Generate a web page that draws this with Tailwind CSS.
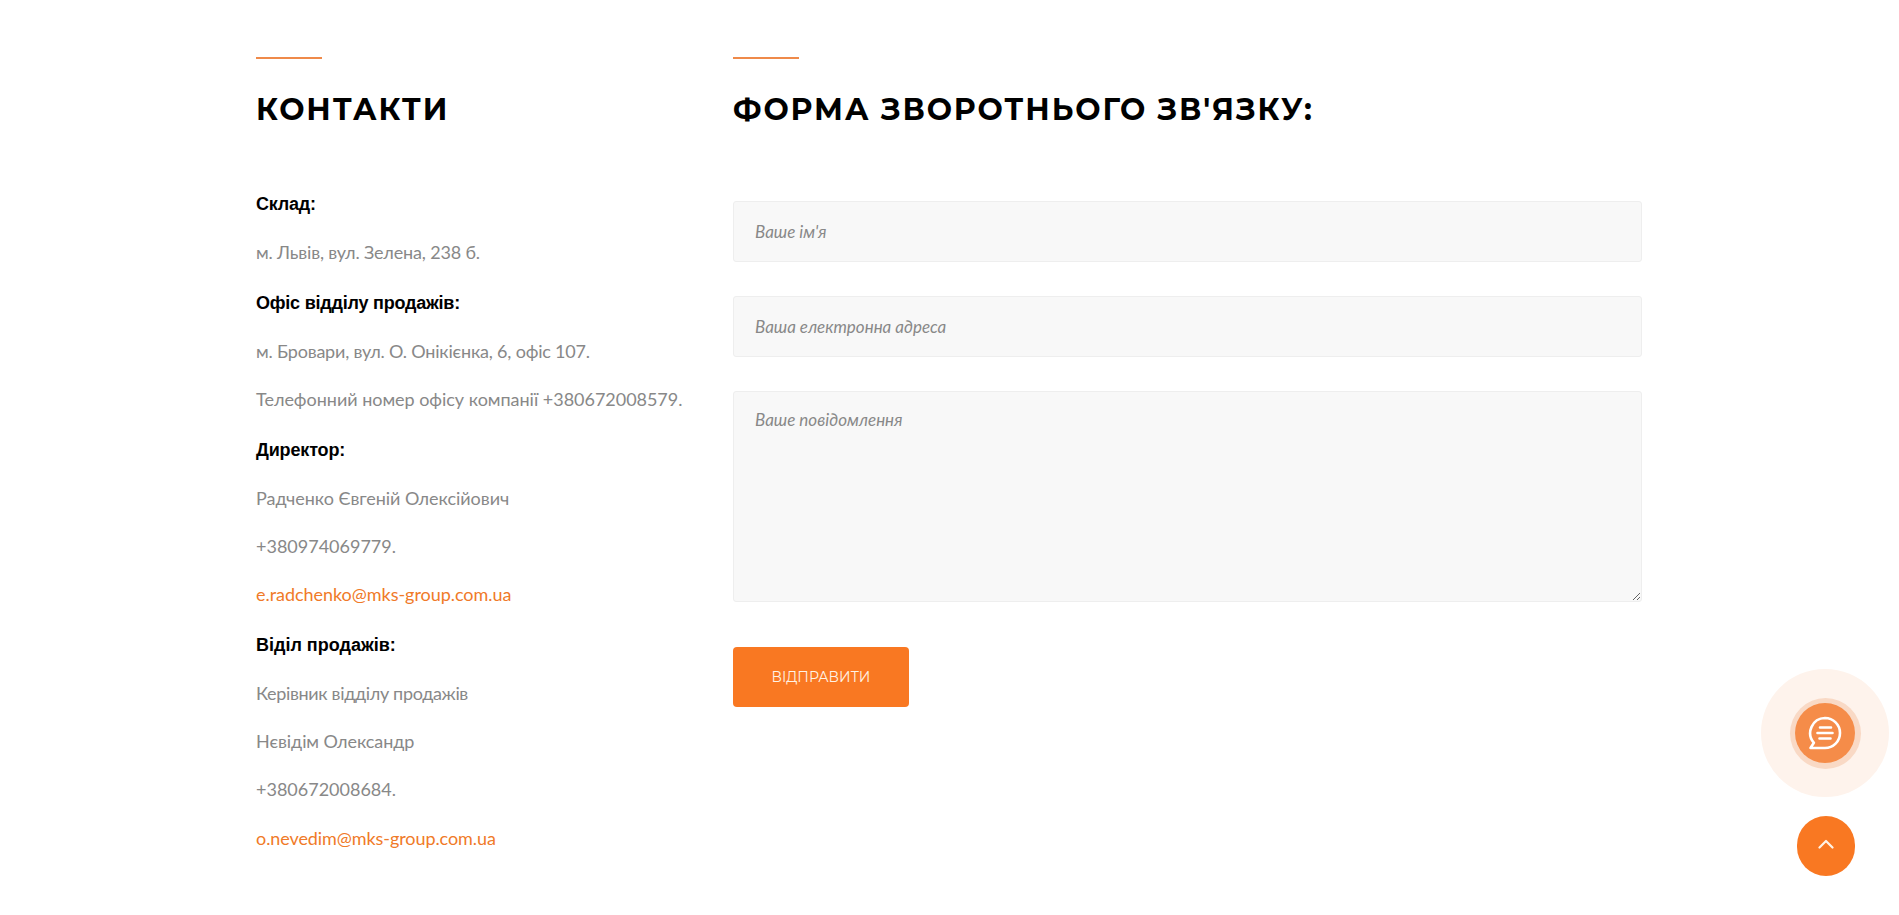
<!DOCTYPE html>
<html lang="uk"><head><meta charset="utf-8"><script src="https://cdn.jsdelivr.net/npm/@tailwindcss/browser@4"></script></head>
<body class="bg-white overflow-hidden">
<div class="relative w-[1899px] h-[915px] overflow-hidden font-['Lato',sans-serif] text-[18px] text-[#888]">
<div class="flex pt-[57px] pl-[256px]">
<div class="w-[477px] shrink-0">
<div class="w-[66px] h-[2px] bg-[#ef8a4a]"></div>
<h2 class="mt-[31px] font-['Montserrat','Inter',sans-serif] font-bold text-[30px] leading-[40px] tracking-[1.9px] text-black">КОНТАКТИ</h2>
<div class="mt-[62px] leading-[24px]">
<h4 class="font-['Liberation_Sans',sans-serif] font-bold text-black tracking-[-0.2px]">Склад:</h4>
<p class="mt-[24px] tracking-[-0.17px]">м. Львів, вул. Зелена, 238 б.</p>
<h4 class="mt-[27px] font-['Liberation_Sans',sans-serif] font-bold text-black tracking-[-0.22px]">Офіс відділу продажів:</h4>
<p class="mt-[24px] tracking-[-0.2px]">м. Бровари, вул. О. Онікієнка, 6, офіс 107.</p>
<p class="mt-[24px] tracking-[-0.03px]">Телефонний номер офісу компанії +380672008579.</p>
<h4 class="mt-[27px] font-['Liberation_Sans',sans-serif] font-bold text-black tracking-[-0.15px]">Директор:</h4>
<p class="mt-[24px] tracking-[-0.04px]">Радченко Євгеній Олексійович</p>
<p class="mt-[24px]">+380974069779.</p>
<p class="mt-[24px] text-[#f07a28] tracking-[-0.04px]">e.radchenko@mks-group.com.ua</p>
<h4 class="mt-[27px] font-['Liberation_Sans',sans-serif] font-bold text-black">Віділ продажів:</h4>
<p class="mt-[24px] tracking-[-0.34px]">Керівник відділу продажів</p>
<p class="mt-[24px] tracking-[-0.08px]">Нєвідім Олександр</p>
<p class="mt-[24px]">+380672008684.</p>
<p class="mt-[25px] text-[#f07a28] tracking-[-0.08px]">o.nevedim@mks-group.com.ua</p>
</div>
</div>
<div class="w-[909px] shrink-0">
<div class="w-[66px] h-[2px] bg-[#ef8a4a]"></div>
<h2 class="mt-[31px] font-['Montserrat','Inter',sans-serif] font-bold text-[30px] leading-[40px] tracking-[1.9px] text-black">ФОРМА ЗВОРОТНЬОГО ЗВ'ЯЗКУ:</h2>
<form class="mt-[71px] flex flex-col items-start">
<input class="w-full h-[61px] px-[21px] bg-[#f8f8f8] border border-[#eee] rounded-[3px] text-[17px] italic placeholder:text-[#888]" placeholder="Ваше ім'я">
<input class="mt-[34px] w-full h-[61px] px-[21px] bg-[#f8f8f8] border border-[#eee] rounded-[3px] text-[17px] italic placeholder:text-[#888]" placeholder="Ваша електронна адреса">
<textarea class="mt-[34px] w-full h-[211px] px-[21px] py-[15px] bg-[#f8f8f8] border border-[#eee] rounded-[3px] text-[17px] italic placeholder:text-[#888] block" placeholder="Ваше повідомлення"></textarea>
<button type="button" class="mt-[45px] w-[176px] h-[60px] rounded-[4px] bg-[#f97822] text-[#fff3e6] text-[14px] font-['Montserrat','Inter',sans-serif]">ВІДПРАВИТИ</button>
</form>
</div>
</div>
<div class="absolute left-[1761px] top-[669px] w-[128px] h-[128px] rounded-full bg-[#fef3ec] flex items-center justify-center">
<div class="w-[71px] h-[71px] rounded-full bg-[#f9d9c5] flex items-center justify-center">
<div class="w-[60px] h-[60px] rounded-full bg-[#f58c49] flex items-center justify-center">
<svg width="34" height="34" viewBox="0 0 34 34" fill="none" stroke="#fff" stroke-width="2.6" stroke-linecap="round" stroke-linejoin="round"><path d="M17 2a15 15 0 0 1 0 30H2.5l3.4-5.2A15 15 0 0 1 17 2z"/><path d="M12 11.5h11M9.500 17h15M11.500 22.500h11"/></svg>
</div></div></div>
<div class="absolute left-[1797px] top-[816px] w-[58px] h-[60px] rounded-full bg-[#f97822] flex items-center justify-center">
<svg width="16" height="10" viewBox="0 0 16 10" fill="none" stroke="#fff3e6" stroke-width="2.200" stroke-linecap="round" stroke-linejoin="round" class="-mt-[5px]"><path d="M1.500 8.500L8 2l6.500 6.500"/></svg>
</div>
</div>
</body></html>
